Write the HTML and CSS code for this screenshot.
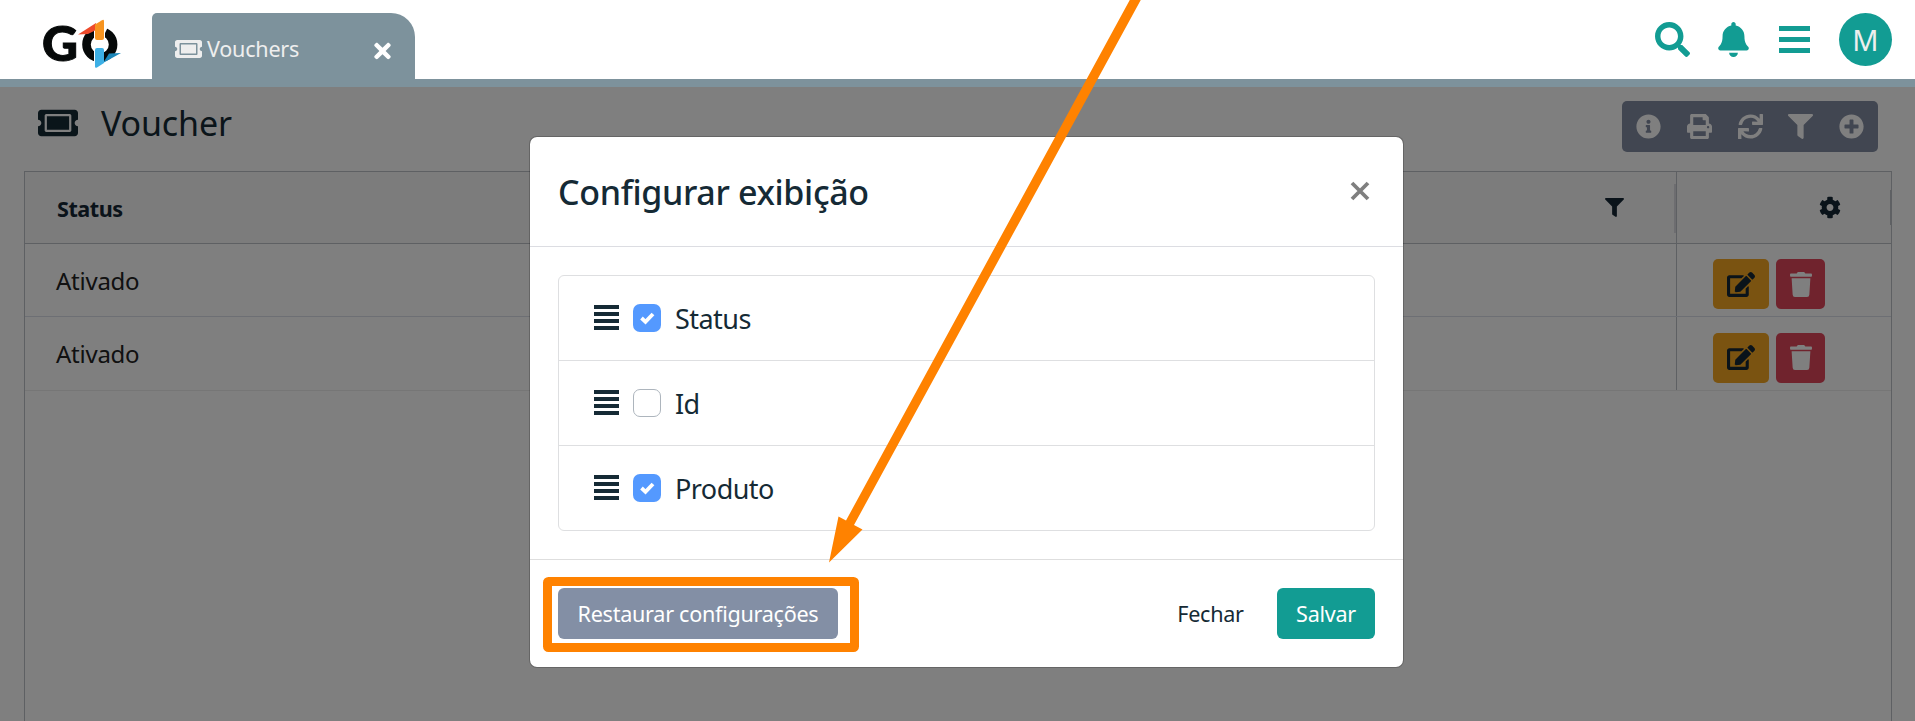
FILE: index.html
```
<!DOCTYPE html>
<html lang="pt-BR">
<head>
<meta charset="utf-8">
<title>Vouchers</title>
<link rel="stylesheet" href="styles.css">
</head>
<body>
<svg class="defs" width="0" height="0" aria-hidden="true">
  <symbol id="ticket" viewBox="0 0 576 512"><path d="M128 160h320v192H128V160zm400 96c0 26.51 21.49 48 48 48v96c0 26.51-21.49 48-48 48H48c-26.51 0-48-21.49-48-48v-96c26.51 0 48-21.49 48-48s-21.49-48-48-48v-96c0-26.51 21.49-48 48-48h480c26.51 0 48 21.49 48 48v96c-26.51 0-48 21.49-48 48zm-48-104c0-13.255-10.745-24-24-24H120c-13.255 0-24 10.745-24 24v208c0 13.255 10.745 24 24 24h336c13.255 0 24-10.745 24-24V152z"/></symbol>
  <symbol id="times" viewBox="0 0 352 512"><path d="M242.72 256l100.07-100.07c12.28-12.28 12.28-32.19 0-44.48l-22.24-22.24c-12.28-12.28-32.19-12.28-44.48 0L176 189.28 75.93 89.21c-12.28-12.28-32.19-12.28-44.48 0L9.21 111.45c-12.28 12.28-12.28 32.19 0 44.48L109.28 256 9.21 356.07c-12.28 12.28-12.28 32.19 0 44.48l22.24 22.24c12.28 12.28 32.2 12.28 44.48 0L176 322.72l100.07 100.07c12.28 12.28 32.2 12.28 44.48 0l22.24-22.24c12.28-12.28 12.28-32.19 0-44.48L242.72 256z"/></symbol>
  <symbol id="search" viewBox="0 0 512 512"><path d="M505 442.7L405.3 343c-4.5-4.5-10.6-7-17-7H372c27.6-35.3 44-79.7 44-128C416 93.1 322.9 0 208 0S0 93.1 0 208s93.1 208 208 208c48.3 0 92.7-16.4 128-44v16.3c0 6.4 2.5 12.5 7 17l99.7 99.7c9.4 9.4 24.6 9.4 33.9 0l28.3-28.3c9.4-9.4 9.4-24.6.1-34zM208 336c-70.7 0-128-57.2-128-128 0-70.7 57.2-128 128-128 70.7 0 128 57.2 128 128 0 70.7-57.2 128-128 128z"/></symbol>
  <symbol id="bell" viewBox="0 0 448 512"><path d="M224 512c35.32 0 63.97-28.65 63.97-64H160.03c0 35.35 28.65 64 63.97 64zm215.39-149.71c-19.32-20.76-55.47-51.99-55.47-154.29 0-77.7-54.48-139.9-127.94-155.16V32c0-17.67-14.32-32-31.98-32s-31.98 14.33-31.98 32v20.84C118.56 68.1 64.08 130.3 64.08 208c0 102.3-36.15 133.53-55.47 154.29-6 6.45-8.66 14.16-8.61 21.71.11 16.4 12.98 32 32.1 32h383.8c19.12 0 32-15.6 32.1-32 .05-7.55-2.61-15.27-8.61-21.71z"/></symbol>
  <symbol id="info" viewBox="0 0 512 512"><path d="M256 8C119.043 8 8 119.083 8 256c0 136.997 111.043 248 248 248s248-111.003 248-248C504 119.083 392.957 8 256 8zm0 110c23.196 0 42 18.804 42 42s-18.804 42-42 42-42-18.804-42-42 18.804-42 42-42zm56 254c0 6.627-5.373 12-12 12h-88c-6.627 0-12-5.373-12-12v-24c0-6.627 5.373-12 12-12h12v-64h-12c-6.627 0-12-5.373-12-12v-24c0-6.627 5.373-12 12-12h64c6.627 0 12 5.373 12 12v100h12c6.627 0 12 5.373 12 12v24z"/></symbol>
  <symbol id="print" viewBox="0 0 512 512"><path d="M448 192V77.25c0-8.49-3.37-16.62-9.37-22.63L393.37 9.37c-6-6-14.14-9.37-22.63-9.37H96C78.33 0 64 14.33 64 32v160c-35.35 0-64 28.65-64 64v112c0 8.84 7.16 16 16 16h48v96c0 17.67 14.33 32 32 32h320c17.67 0 32-14.33 32-32v-96h48c8.84 0 16-7.16 16-16V256c0-35.35-28.65-64-64-64zm-64 256H128v-96h256v96zm0-224H128V64h192v48c0 8.84 7.16 16 16 16h48v96zm48 72c-13.25 0-24-10.75-24-24 0-13.26 10.75-24 24-24s24 10.74 24 24c0 13.25-10.75 24-24 24z"/></symbol>
  <symbol id="sync" viewBox="0 0 512 512"><path d="M440.65 12.57l4 82.77A247.16 247.16 0 0 0 255.83 8C134.73 8 33.91 94.92 12.29 209.82A12 12 0 0 0 24.09 224h49.05a12 12 0 0 0 11.67-9.26 175.91 175.91 0 0 1 317-56.94l-101.46-4.86a12 12 0 0 0-12.57 12v47.41a12 12 0 0 0 12 12H500a12 12 0 0 0 12-12V12a12 12 0 0 0-12-12h-47.37a12 12 0 0 0-11.98 12.57zM255.83 432a175.61 175.61 0 0 1-146-77.8l101.8 4.87a12 12 0 0 0 12.57-12v-47.4a12 12 0 0 0-12-12H12a12 12 0 0 0-12 12V500a12 12 0 0 0 12 12h47.35a12 12 0 0 0 12-12.6l-4.15-82.57A247.17 247.17 0 0 0 255.83 504c121.11 0 221.93-86.92 243.55-201.82a12 12 0 0 0-11.8-14.18h-49.05a12 12 0 0 0-11.67 9.26A175.86 175.86 0 0 1 255.83 432z"/></symbol>
  <symbol id="filter" viewBox="0 0 512 512"><path d="M487.976 0H24.028C2.71 0-8.047 25.866 7.058 40.971L192 225.941V432c0 7.831 3.821 15.17 10.237 19.662l80 55.98C298.02 518.69 320 507.493 320 487.98V225.941l184.947-184.97C520.021 25.896 509.338 0 487.976 0z"/></symbol>
  <symbol id="plus" viewBox="0 0 512 512"><path d="M256 8C119 8 8 119 8 256s111 248 248 248 248-111 248-248S393 8 256 8zm144 276c0 6.6-5.4 12-12 12h-92v92c0 6.6-5.4 12-12 12h-56c-6.6 0-12-5.4-12-12v-92h-92c-6.6 0-12-5.4-12-12v-56c0-6.6 5.4-12 12-12h92v-92c0-6.6 5.4-12 12-12h56c6.6 0 12 5.4 12 12v92h92c6.6 0 12 5.4 12 12v56z"/></symbol>
  <symbol id="cog" viewBox="0 0 512 512"><path d="M487.4 315.7l-42.6-24.6c4.3-23.2 4.3-47 0-70.2l42.6-24.6c4.9-2.8 7.1-8.6 5.5-14-11.1-35.6-30-67.8-54.7-94.6-3.8-4.1-10-5.1-14.8-2.3L380.8 110c-17.9-15.4-38.5-27.3-60.8-35.1V25.8c0-5.6-3.9-10.5-9.4-11.7-36.7-8.2-74.3-7.8-109.2 0-5.5 1.2-9.4 6.1-9.4 11.7V75c-22.2 7.9-42.8 19.8-60.8 35.1L88.7 85.5c-4.9-2.8-11-1.9-14.8 2.3-24.7 26.7-43.6 58.9-54.7 94.6-1.7 5.4.6 11.2 5.5 14L67.3 221c-4.3 23.2-4.3 47 0 70.2l-42.6 24.6c-4.9 2.8-7.1 8.6-5.5 14 11.1 35.6 30 67.8 54.7 94.6 3.8 4.1 10 5.1 14.8 2.3l42.6-24.6c17.9 15.4 38.5 27.3 60.8 35.1v49.2c0 5.6 3.9 10.5 9.4 11.7 36.7 8.2 74.3 7.8 109.2 0 5.5-1.2 9.4-6.1 9.4-11.7v-49.2c22.2-7.9 42.8-19.8 60.8-35.1l42.6 24.6c4.9 2.8 11 1.9 14.8-2.3 24.7-26.7 43.6-58.9 54.7-94.6 1.5-5.5-.7-11.3-5.6-14.1zM256 336c-44.1 0-80-35.9-80-80s35.9-80 80-80 80 35.9 80 80-35.9 80-80 80z"/></symbol>
  <symbol id="edit" viewBox="0 0 576 512"><path d="M402.6 83.2l90.2 90.2c3.8 3.8 3.8 10 0 13.8L274.4 405.6l-92.8 10.3c-12.4 1.4-22.9-9.1-21.5-21.5l10.3-92.8L388.8 83.2c3.8-3.8 10-3.8 13.8 0zm162-22.9l-48.8-48.8c-15.2-15.2-39.9-15.2-55.2 0l-35.4 35.4c-3.8 3.8-3.8 10 0 13.8l90.2 90.2c3.8 3.8 10 3.8 13.8 0l35.4-35.4c15.2-15.3 15.2-40 0-55.2zM384 346.2V448H64V128h229.8c3.2 0 6.2-1.3 8.5-3.5l40-40c7.6-7.6 2.2-20.5-8.5-20.5H48C21.5 64 0 85.5 0 112v352c0 26.5 21.5 48 48 48h352c26.5 0 48-21.5 48-48V306.2c0-10.7-12.9-16-20.5-8.5l-40 40c-2.2 2.3-3.5 5.3-3.5 8.5z"/></symbol>
  <symbol id="trash" viewBox="0 0 448 512"><path d="M432 32H312l-9.4-18.7A24 24 0 0 0 281.1 0H166.8a23.72 23.72 0 0 0-21.4 13.3L136 32H16A16 16 0 0 0 0 48v32a16 16 0 0 0 16 16h416a16 16 0 0 0 16-16V48a16 16 0 0 0-16-16zM53.2 467a48 48 0 0 0 47.9 45h245.8a48 48 0 0 0 47.9-45L416 128H32z"/></symbol>
  <symbol id="grip" viewBox="0 0 25 25"><path d="M0 0h25v4H0zM0 7h25v4H0zM0 14h25v4H0zM0 21h25v4H0z"/></symbol>
</svg>

<header class="topbar">
  <svg class="logo" viewBox="0 0 80 50" role="img" aria-label="GO">
    <text class="logo-g" x="0" y="42" textLength="36" lengthAdjust="spacingAndGlyphs">G</text>
    <circle cx="57.800" cy="25.500" r="13.300" fill="none" stroke="#060909" stroke-width="8.600"/>
    <path d="M52 6h11l2.500 3-2.500 5v7H52zM52 29h10v14H52z" fill="#fff"/>
    <path d="M36 15.500L54 4v7l-8 4z" fill="#ee4a2b"/>
    <path d="M53 5.500L60 1.200q2-1 2 1V19q0 2-2 2h-5q-2 0-2-2z" fill="#f79420"/>
    <path d="M79 34l-12 .5-6 9.500z" fill="#1b86b8"/>
    <path d="M53 31q0-2 2-2h5q2 0 2 2v13l-7 4.500q-2 1-2-1z" fill="#3db0e6"/>
  </svg>
  <div class="tab">
    <svg class="tab-icon"><use href="#ticket"/></svg>
    <span class="tab-label">Vouchers</span>
    <svg class="tab-close"><use href="#times"/></svg>
  </div>
  <nav class="top-actions">
    <svg class="act-search"><use href="#search"/></svg>
    <svg class="act-bell"><use href="#bell"/></svg>
    <svg class="act-menu" viewBox="0 0 31 27"><path d="M0 0h31v5H0zM0 11h31v5H0zM0 22h31v5H0z"/></svg>
    <span class="avatar">M</span>
  </nav>
</header>

<main class="page">
  <div class="page-head">
    <svg class="page-icon"><use href="#ticket"/></svg>
    <h1 class="page-title">Voucher</h1>
    <div class="toolbar">
      <svg><use href="#info"/></svg>
      <svg><use href="#print"/></svg>
      <svg><use href="#sync"/></svg>
      <svg><use href="#filter"/></svg>
      <svg><use href="#plus"/></svg>
    </div>
  </div>
  <div class="grid">
    <div class="row row-head">
      <div class="cell cell-name">Status<svg class="col-filter"><use href="#filter"/></svg><i class="handle"></i></div>
      <div class="cell cell-cog"><svg class="cog"><use href="#cog"/></svg><i class="handle-end"></i></div>
    </div>
    <div class="row">
      <div class="cell cell-name">Ativado</div>
      <div class="cell cell-btns"><span class="btn-edit"><svg><use href="#edit"/></svg></span><span class="btn-del"><svg><use href="#trash"/></svg></span></div>
    </div>
    <div class="row row-last">
      <div class="cell cell-name">Ativado</div>
      <div class="cell cell-btns"><span class="btn-edit"><svg><use href="#edit"/></svg></span><span class="btn-del"><svg><use href="#trash"/></svg></span></div>
    </div>
  </div>
  <div class="backdrop">
    <section class="modal">
      <div class="modal-head">
        <h2 class="modal-title">Configurar exibição</h2>
        <svg class="modal-close" viewBox="0 0 20 20"><path d="M2 2l16 16M18 2L2 18"/></svg>
      </div>
      <div class="modal-body">
        <ul class="list">
          <li class="item"><svg class="grip"><use href="#grip"/></svg><span class="check checked"><svg viewBox="0 0 28 28"><path d="M8.500 14l4 3.800L20 10"/></svg></span><span class="item-label">Status</span></li>
          <li class="item"><svg class="grip"><use href="#grip"/></svg><span class="check"></span><span class="item-label">Id</span></li>
          <li class="item"><svg class="grip"><use href="#grip"/></svg><span class="check checked"><svg viewBox="0 0 28 28"><path d="M8.500 14l4 3.800L20 10"/></svg></span><span class="item-label">Produto</span></li>
        </ul>
      </div>
      <div class="modal-foot">
        <button class="btn btn-reset">Restaurar configurações</button>
        <button class="btn btn-close">Fechar</button>
        <button class="btn btn-save">Salvar</button>
      </div>
    </section>
  </div>
</main>

<svg class="annotation" viewBox="0 0 1915 721">
  <rect x="547.500" y="581.500" width="307" height="66" rx="1" fill="none" stroke="#ff8200" stroke-width="9" stroke-linejoin="round"/>
  <path d="M1130.300-1h11L854 525l8.500 4.500L829 562.500l9.500-46 7.500 4z" fill="#ff8200"/>
</svg>
</body>
</html>
```
FILE: styles.css
```
* { box-sizing: border-box; }

body {
  margin: 0;
  width: 1915px;
  height: 721px;
  overflow: hidden;
  background: #fff;
  color: #152a35;
  font-family: "Noto Sans", "Open Sans", sans-serif;
}

svg { display: block; flex: none; fill: currentColor; }
.defs { position: absolute; }

/* Top bar */
.topbar {
  display: flex;
  height: 87px;
  padding: 13px 23px 0 42px;
  border-bottom: 8px solid #7d929c;
}
.logo { width: 80px; height: 50px; margin-top: 6px; overflow: visible; }
.logo-g { font: 900 47px Lato, sans-serif; fill: #060909; stroke: #060909; stroke-width: 1; }
.tab {
  display: flex;
  align-items: center;
  width: 263px;
  height: 66px;
  margin-left: 30px;
  padding: 5px 24px 0 23px;
  border-radius: 5px 24px 0 0;
  background: #7d929c;
  color: #eee;
}
.tab-icon { width: 27px; height: 24px; }
.tab-label { margin-left: 5px; font-size: 21.6px; letter-spacing: -0.25px; }
.tab-close { width: 17px; height: 24px; margin: 5px 0 0 auto; color: #fff; }
.top-actions {
  display: flex;
  align-items: center;
  height: 53px;
  margin-left: auto;
  color: #129c93;
}
.act-search { width: 35px; height: 35px; }
.act-bell { width: 31px; height: 35px; margin-left: 28px; }
.act-menu { width: 31px; height: 27px; margin-left: 30px; }
.avatar {
  width: 53px;
  margin-left: 29px;
  border-radius: 50%;
  background: #129c93;
  color: #eee;
  font-size: 29px;
  line-height: 53px;
  text-align: center;
}

/* Page */
.page { position: relative; height: 634px; padding: 14px 23px 0 24px; overflow: hidden; }
.page-head { display: flex; height: 51px; padding: 0 14px; }
.page-icon { width: 40px; height: 36px; margin-top: 4px; }
.page-title { margin: -2px 0 0 23px; font-size: 34px; font-weight: 400; letter-spacing: -0.15px; line-height: 48px; }
.toolbar {
  display: flex;
  align-items: center;
  justify-content: space-between;
  width: 256px;
  margin-left: auto;
  padding: 0 14px;
  border-radius: 5px;
  background: #828ca2;
  color: #fff;
}
.toolbar svg { width: 25px; height: 25px; }

.grid { height: 600px; margin-top: 19px; border: 1px solid #bdc0c7; }
.row { display: flex; height: 73px; border-bottom: 1px solid #dadee8; color: #222; font-size: 24px; letter-spacing: -0.25px; }
.row-last { height: 74px; border-bottom-color: #ededed; }
.row-head {
  height: 72px;
  border-bottom-color: #bdc0c7;
  background: #f8f8f8;
  color: #152634;
  font-size: 21.6px;
  font-weight: 700;
}
.cell { display: flex; align-items: center; }
.cell-name { flex: 1; padding: 0 0 0 31px; border-right: 1px solid #bdc0c7; }
.row-head .cell-name { padding: 2px 0 0 32px; letter-spacing: -0.45px; }
.cell-cog, .cell-btns { width: 214px; }
.col-filter { width: 19px; height: 19px; margin: -2px 50px 0 auto; }
.handle { width: 2px; height: 49px; background: #dadbe0; }
.cog { width: 22px; height: 23px; margin-left: 142px; }
.handle-end { width: 1px; height: 35px; margin-left: auto; background: #bdc0c7; }
.cell-btns { gap: 7px; padding: 8px 0 0 36px; }
.btn-edit, .btn-del { display: grid; place-items: center; height: 50px; border-radius: 5px; }
.btn-edit { width: 56px; background: #f4a722; color: #152634; }
.btn-del { width: 49px; background: #e0465a; color: #fff; }
.btn-edit svg { width: 28px; height: 25px; }
.btn-del svg { width: 22px; height: 25px; }

/* Dialog */
.backdrop {
  position: absolute;
  inset: 0;
  display: flex;
  justify-content: center;
  align-items: flex-start;
  padding: 49px 0 0 18px;
  background: rgba(0, 0, 0, .5);
}
.modal {
  width: 875px;
  height: 532px;
  border: 1px solid rgba(0, 0, 0, .2);
  border-radius: 8px;
  background: #fff;
  background-clip: padding-box;
}
.modal-head {
  display: flex;
  align-items: center;
  justify-content: space-between;
  height: 110px;
  padding: 0 33px 0 28px;
  border-bottom: 1px solid #dcdde2;
}
.modal-title { margin: 0; font-size: 34px; font-weight: 500; letter-spacing: -0.35px; line-height: 48px; }
.modal-close { width: 20px; height: 20px; margin-top: -1px; stroke: #7f7f7f; stroke-width: 3.8; }
.modal-body { height: 313px; padding: 28px; border-bottom: 1px solid #dedede; }
.list { margin: 0; padding: 0; border: 1px solid #dedfe1; border-radius: 6px; list-style: none; }
.item { display: flex; align-items: center; height: 85px; padding-left: 35px; border-bottom: 1px solid #dedfe1; }
.item:last-child { height: 84px; border-bottom: 0; }
.grip { width: 25px; height: 25px; margin-top: -1px; }
.check { width: 28px; height: 28px; margin: -1px 0 0 14px; border: 1px solid #adb5bd; border-radius: 7px; }
.checked { border: 0; background: #5499ff; }
.checked svg { fill: none; stroke: #fff; stroke-width: 3.8; }
.item-label { margin: 1px 0 0 14px; font-size: 27px; letter-spacing: -0.55px; }

.modal-foot { display: flex; height: 107px; padding: 28px 28px 0; }
.btn {
  height: 51px;
  padding: 0;
  border: 0;
  border-radius: 6px;
  font-family: inherit;
  font-size: 21.6px;
  letter-spacing: -0.28px;
  color: #fff;
}
.btn-reset { width: 280px; background: #838fa5; }
.btn-close { width: 105px; margin: 0 14px 0 auto; background: none; color: #152a35; }
.btn-save { width: 98px; background: #129c93; }

/* Callout arrow and frame drawn over the whole page */
.annotation { position: absolute; top: 0; left: 0; width: 1915px; height: 721px; pointer-events: none; }
```
